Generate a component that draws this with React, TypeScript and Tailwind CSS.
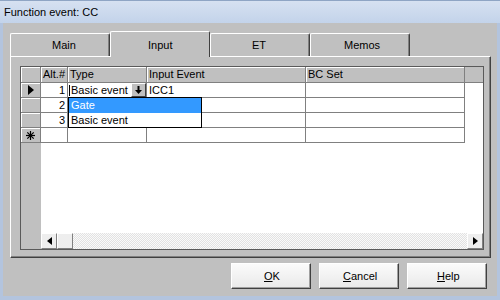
import React from "react";

const rows = [
  { alt: "1", input: "ICC1" },
  { alt: "2", input: "" },
  { alt: "3", input: "" },
  { alt: "", input: "" },
];

const tabs = [
  { label: "Main", pad: "pl-[41px]" },
  { label: "Input", pad: "pl-[37px]", selected: true },
  { label: "ET", pad: "pl-[41px]" },
  { label: "Memos", pad: "pl-[33px]" },
];

function Triangle({ dir, big }: { dir: "left" | "right"; big?: boolean }) {
  const w = big ? 6 : 5;
  const h = big ? 10 : 8;
  return (
    <svg width={w} height={h} viewBox={`0 0 ${w} ${h}`}>
      {dir === "right" ? (
        <polygon points={`0,0 ${w},${h / 2} 0,${h}`} fill="#000" />
      ) : (
        <polygon points={`${w},0 0,${h / 2} ${w},${h}`} fill="#000" />
      )}
    </svg>
  );
}

function Star() {
  return (
    <svg width="9" height="9" viewBox="0 0 9 9" stroke="#000" strokeWidth="1.2">
      <line x1="4.5" y1="0" x2="4.5" y2="9" />
      <line x1="0" y1="4.5" x2="9" y2="4.5" />
      <line x1="1.3" y1="1.3" x2="7.7" y2="7.7" />
      <line x1="7.7" y1="1.3" x2="1.3" y2="7.7" />
    </svg>
  );
}

function DownArrow() {
  return (
    <svg width="7" height="8" viewBox="0 0 7 8">
      <rect x="2.5" y="0" width="2" height="4" fill="#000" />
      <polygon points="0,4 7,4 3.5,8" fill="#000" />
    </svg>
  );
}

function Tab({ label, pad, selected }: { label: string; pad: string; selected?: boolean }) {
  return selected ? (
    <div className={`relative z-10 -mb-px w-[100px] h-[26px] bg-[#c0c0c0] border-t border-l border-white border-r border-r-[#404040] rounded-t-[2px] pt-[6px] leading-[14px] ${pad}`}>
      {label}
    </div>
  ) : (
    <div className={`w-[100px] h-[23px] bg-[#c0c0c0] border-t border-l border-white border-r border-r-[#404040] rounded-t-[2px] shadow-[inset_-1px_0_0_#808080] pt-[4px] leading-[14px] ${pad}`}>
      {label}
    </div>
  );
}

function Button({ mn, rest, pad }: { mn: string; rest: string; pad: string }) {
  return (
    <button className={`w-[80px] h-[26px] bg-linear-to-b from-[#fbfbfb] to-[#e9e9e9] border border-t-white border-l-white border-r-[#404040] border-b-[#404040] shadow-[inset_-1px_-1px_0_#a0a0a0] text-left leading-[14px] ${pad}`}>
      <span className="underline">{mn}</span>
      {rest}
    </button>
  );
}

export default function App() {
  return (
    <div className="w-[500px] h-[300px] flex flex-col bg-[#b3c4de] font-['Liberation_Sans',Arial,sans-serif] text-[11px] text-black overflow-hidden">
      {/* Title bar */}
      <div className="h-[23px] pl-[4px] pt-[4px] leading-[14px] bg-linear-to-b from-[#d6e1f1] to-[#c3d3ea] border-t border-[#8fa5c4]">
        Function event: CC
      </div>

      <div className="flex-1 mx-[3px] mb-[4px] bg-[#c0c0c0] flex flex-col">
        {/* Tabs */}
        <div className="h-[33px] flex items-end pl-[7px]">
          {tabs.map((t) => (
            <Tab key={t.label} label={t.label} pad={t.pad} selected={t.selected} />
          ))}
        </div>

        {/* Tab page */}
        <div className="ml-[7px] w-[481px] h-[202px] border-t border-l border-white border-r border-b border-r-[#404040] border-b-[#404040] shadow-[inset_-1px_-1px_0_#808080] pl-[9px] pt-[9px]">
          <div className="relative w-[464px] h-[184px] border border-[#5a5a5a] bg-white flex">
            {/* Row selectors */}
            <div className="w-[20px] bg-[#c0c0c0] flex flex-col">
              <div className="h-[16px] border-r border-b border-[#808080] shadow-[inset_1px_1px_0_#fff]" />
              {rows.map((r, i) => (
                <div
                  key={i}
                  className="h-[15px] border-r border-b border-[#808080] shadow-[inset_1px_1px_0_#fff] flex items-center justify-center"
                >
                  {i === 0 && <Triangle dir="right" big />}
                  {i === 3 && <Star />}
                </div>
              ))}
            </div>

            <div className="flex-1 flex flex-col">
              {/* Header */}
              <div className="h-[16px] flex bg-[#c0c0c0] border-b border-[#808080]">
                <div className="w-[27px] border-r border-[#808080] shadow-[inset_1px_1px_0_#fff] pl-[2px] leading-[15px]">Alt.#</div>
                <div className="w-[79px] border-r border-[#808080] shadow-[inset_1px_1px_0_#fff] pl-[2px] leading-[15px]">Type</div>
                <div className="w-[159px] border-r border-[#808080] shadow-[inset_1px_1px_0_#fff] pl-[2px] leading-[15px]">Input Event</div>
                <div className="w-[159px] border-r border-[#808080] shadow-[inset_1px_1px_0_#fff] pl-[2px] leading-[15px]">BC Set</div>
                <div className="flex-1" />
              </div>

              {/* Rows */}
              {rows.map((r, i) => (
                <div key={i} className="h-[15px] flex">
                  <div className="w-[27px] border-r border-b border-[#808080] text-right pr-[2px] leading-[14px]">{r.alt}</div>
                  <div className="w-[79px] border-r border-b border-[#808080] flex">
                    {i === 0 && (
                      <>
                        <div className="flex-1 flex items-center pl-[1px]">
                          <span className="w-px h-[11px] bg-black mr-[1px]" />
                          Basic event
                        </div>
                        <div className="w-[15px] h-[14px] bg-[#c0c0c0] border border-t-white border-l-white border-r-[#404040] border-b-[#404040] flex items-center justify-center">
                          <DownArrow />
                        </div>
                      </>
                    )}
                  </div>
                  <div className="w-[159px] border-r border-b border-[#808080] pl-[2px] leading-[14px]">{r.input}</div>
                  <div className="w-[159px] border-r border-b border-[#808080]" />
                  <div className="flex-1" />
                </div>
              ))}

              <div className="flex-1" />

              {/* Horizontal scrollbar */}
              <div className="h-[16px] flex">
                <div className="w-[16px] bg-[#eeeeee] border border-t-white border-l-white border-r-[#808080] border-b-[#808080] flex items-center justify-center">
                  <Triangle dir="left" />
                </div>
                <div className="w-[16px] bg-[#eeeeee] border border-t-white border-l-white border-r-[#808080] border-b-[#808080]" />
                <div className="flex-1 bg-[conic-gradient(#e2e2e2_25%,#fafafa_0_50%,#e2e2e2_0_75%,#fafafa_0)] bg-size-[2px_2px]" />
                <div className="w-[16px] bg-[#eeeeee] border border-t-white border-l-white border-r-[#808080] border-b-[#808080] flex items-center justify-center">
                  <Triangle dir="right" />
                </div>
              </div>
            </div>

            {/* Open dropdown list */}
            <div className="absolute left-[47px] top-[30px] w-[134px] h-[31px] border border-black bg-white z-10 flex flex-col">
              <div className="h-[15px] bg-[#3399ff] text-white pl-[2px] leading-[15px]">Gate</div>
              <div className="h-[14px] pl-[2px] leading-[14px]">Basic event</div>
            </div>
          </div>
        </div>

        {/* Buttons */}
        <div className="mt-[5px] flex justify-end gap-[8px] pr-[10px]">
          <Button mn="O" rest="K" pad="pl-[32px]" />
          <Button mn="C" rest="ancel" pad="pl-[23px]" />
          <Button mn="H" rest="elp" pad="pl-[29px]" />
        </div>
      </div>
    </div>
  );
}
